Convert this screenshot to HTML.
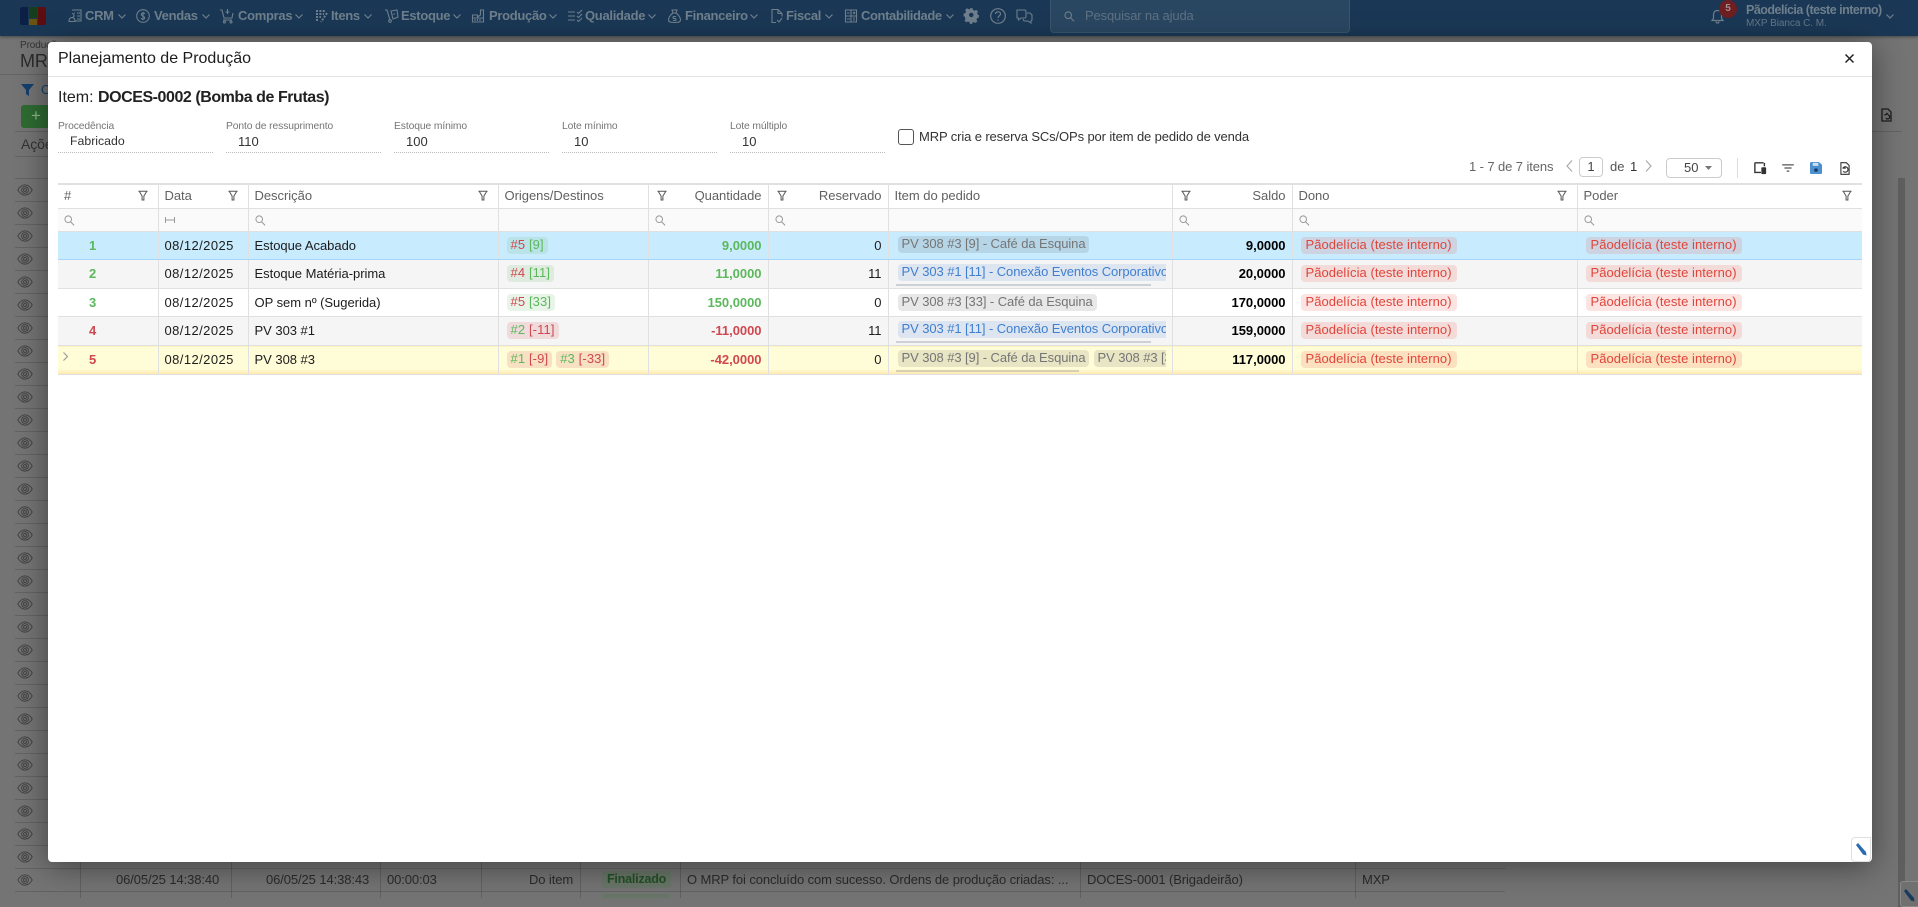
<!DOCTYPE html>
<html lang="pt-BR"><head><meta charset="utf-8"><title>Planejamento de Produção</title>
<style>
*{box-sizing:border-box}
html,body{margin:0;padding:0;width:1918px;height:907px;overflow:hidden;background:#747474;font-family:"Liberation Sans",sans-serif;font-size:13px;color:#212121}
.a{position:absolute;white-space:nowrap;line-height:1}
svg{position:absolute;display:block;overflow:visible}
#top{position:absolute;left:0;top:0;width:1918px;height:36px;background:#1a3856;box-shadow:0 1px 3px rgba(0,0,0,.4)}
.n{color:#6f7f8c;font-weight:bold;font-size:13px;top:9px;letter-spacing:-.3px}
.ni{fill:none;stroke:#6f7f8c;stroke-width:1.1;top:9px}
.ch{fill:none;stroke:#6f7f8c;stroke-width:1.2;top:14px}
.eye{left:17px;fill:none;stroke:#444;stroke-width:1}
#modal{position:absolute;left:48px;top:42px;width:1824px;height:820px;background:#fff;border-radius:4px;box-shadow:0 4px 32px rgba(0,0,0,.45)}
.lab{font-size:10.3px;color:#757575;letter-spacing:-.1px}
.val{font-size:13px;color:#333;top:93px}
.und{position:absolute;top:110px;width:155px;border-bottom:1px dotted #bbb;height:1px}
table{position:absolute;left:10px;top:141px;width:1804px;border-collapse:collapse;table-layout:fixed;font-size:13px;letter-spacing:-.03px;color:#1c1c1c}
td,th{border:1px solid #e0e0e0;padding:0 6px 1px;white-space:nowrap;position:relative;overflow:hidden;font-weight:normal;text-align:left}
td:first-child,th:first-child{border-left:0}
td:last-child,th:last-child{border-right:0}
tr.h th{height:24.5px;color:#616161;border-top:2px solid #e0e0e0;background:#fff;padding-bottom:3px}
tr.f td{height:23px;background:#fafafa}
.r{text-align:right !important}
.fi{fill:none;stroke:#555;stroke-width:1.1;top:5px}
.s{fill:none;stroke:#999;stroke-width:1.1;top:6px;left:6px}
.num{font-weight:bold;padding-left:31px;padding-right:0}
.dt{letter-spacing:.42px}
.g{color:#5cb85c}.d{color:#d0474f}
.b{font-weight:bold;color:#000}
.q{font-weight:bold}
.c{display:inline-block;height:17px;line-height:16px;padding:0 4px;border-radius:4px;margin-right:4px;vertical-align:middle;letter-spacing:.05px}
.og{margin-left:2px}
.tr{background:rgba(92,184,92,.15)}.rd{background:rgba(208,71,79,.15)}
.og,.rd{letter-spacing:.12px}
.gy{background:rgba(0,0,0,.09);color:#757575;letter-spacing:-.08px}
.bl{background:rgba(63,127,208,.13);color:#3f7fd0;letter-spacing:-.08px}
.ow{background:rgba(231,76,60,.15);color:#e0453a;padding:0 5px;letter-spacing:.06px;margin-left:2px}
.clip{position:absolute;left:4px;right:6px;top:0;bottom:0;overflow:hidden;display:block}
.clip .c{position:absolute;top:4px}
.sb{position:absolute;left:3px;top:24px;height:2px;background:rgba(100,110,125,.27)}
tr.r1 td{height:28px;background:#c9ebfe;border-bottom:1px solid #a5d6f7}
tr.r2 td{height:29px;background:#f5f5f5}
tr.r3 td{height:28px;background:#fff}
tr.r4 td{height:29px;background:#f5f5f5}
tr.r5 td{height:29px;background:linear-gradient(#fffcd8 0,#fffcd8 80%,#ffe9ab 100%);border-bottom:1px solid #e0e0e0}
.bg{color:#2b2b2b;font-size:13px;letter-spacing:-.1px}
.ln{position:absolute;background:rgba(40,40,40,.22);height:1px}
.vl{position:absolute;background:rgba(40,40,40,.25);width:1px}
</style></head><body>
<svg width="0" height="0" style="position:absolute"><defs>
<symbol id="fl" viewBox="0 0 11 11"><path d="M.5 .8h10M1.3 .8L4.5 6v4.5h2V6L9.7 .8"/></symbol>
<symbol id="sr" viewBox="0 0 12 12"><circle cx="4.6" cy="4.6" r="3.6"/><path d="M7.2 7.4L11 11.3"/></symbol>
<symbol id="ey" viewBox="0 0 16 12"><path d="M.8 6C3 2.2 5.4 .9 8 .9s5 1.3 7.2 5.1C13 9.8 10.6 11.1 8 11.1S3 9.8 .8 6z"/><circle cx="8" cy="6" r="3.4"/><circle cx="8" cy="6" r="1.5"/></symbol>
<symbol id="cv" viewBox="0 0 8 5"><path d="M.5 .5L4 4l3.5-3.5"/></symbol>
</defs></svg>

<!-- background page -->
<div class="a bg" style="left:20px;top:41px;font-size:10px;color:#333">Produção</div>
<div class="a bg" style="left:20px;top:52px;font-size:18px;color:#2b2b2b">MRP</div>
<div class="ln" style="left:0;top:74px;width:48px;background:rgba(40,40,40,.2)"></div>
<svg style="left:21px;top:84px" width="13" height="12"><path d="M0 0h13L8 6v6L5 10V6z" fill="#14406c"/></svg>
<div class="a" style="left:41px;top:83px;color:#14406c;font-size:13px">O</div>
<div class="a" style="left:21px;top:105px;width:40px;height:23px;background:#2e6b32;border-radius:3px;color:#8fb890;font-size:17px;line-height:22px;padding-left:10px">+</div>
<div class="ln" style="left:15px;top:131px;width:40px"></div>
<div class="a bg" style="left:21px;top:137px;font-size:14px;color:#333">Ações</div>
<div class="ln" style="left:15px;top:156px;width:40px"></div>
<div class="ln" style="left:15px;top:178px;width:40px"></div>
<div class="ln" style="left:15px;top:201px;width:40px"></div>
<div class="ln" style="left:15px;top:224px;width:40px"></div>
<div class="ln" style="left:15px;top:247px;width:40px"></div>
<div class="ln" style="left:15px;top:270px;width:40px"></div>
<div class="ln" style="left:15px;top:293px;width:40px"></div>
<div class="ln" style="left:15px;top:316px;width:40px"></div>
<div class="ln" style="left:15px;top:339px;width:40px"></div>
<div class="ln" style="left:15px;top:362px;width:40px"></div>
<div class="ln" style="left:15px;top:385px;width:40px"></div>
<div class="ln" style="left:15px;top:408px;width:40px"></div>
<div class="ln" style="left:15px;top:431px;width:40px"></div>
<div class="ln" style="left:15px;top:454px;width:40px"></div>
<div class="ln" style="left:15px;top:477px;width:40px"></div>
<div class="ln" style="left:15px;top:500px;width:40px"></div>
<div class="ln" style="left:15px;top:523px;width:40px"></div>
<div class="ln" style="left:15px;top:546px;width:40px"></div>
<div class="ln" style="left:15px;top:569px;width:40px"></div>
<div class="ln" style="left:15px;top:592px;width:40px"></div>
<div class="ln" style="left:15px;top:615px;width:40px"></div>
<div class="ln" style="left:15px;top:638px;width:40px"></div>
<div class="ln" style="left:15px;top:661px;width:40px"></div>
<div class="ln" style="left:15px;top:684px;width:40px"></div>
<div class="ln" style="left:15px;top:707px;width:40px"></div>
<div class="ln" style="left:15px;top:730px;width:40px"></div>
<div class="ln" style="left:15px;top:753px;width:40px"></div>
<div class="ln" style="left:15px;top:776px;width:40px"></div>
<div class="ln" style="left:15px;top:799px;width:40px"></div>
<div class="ln" style="left:15px;top:822px;width:40px"></div>
<div class="ln" style="left:15px;top:845px;width:40px"></div>
<div class="ln" style="left:15px;top:868px;width:1490px"></div>
<div class="ln" style="left:15px;top:891px;width:1490px"></div>
<svg class="eye" style="top:184px" width="16" height="12"><use href="#ey"/></svg>
<svg class="eye" style="top:207px" width="16" height="12"><use href="#ey"/></svg>
<svg class="eye" style="top:230px" width="16" height="12"><use href="#ey"/></svg>
<svg class="eye" style="top:253px" width="16" height="12"><use href="#ey"/></svg>
<svg class="eye" style="top:276px" width="16" height="12"><use href="#ey"/></svg>
<svg class="eye" style="top:299px" width="16" height="12"><use href="#ey"/></svg>
<svg class="eye" style="top:322px" width="16" height="12"><use href="#ey"/></svg>
<svg class="eye" style="top:345px" width="16" height="12"><use href="#ey"/></svg>
<svg class="eye" style="top:368px" width="16" height="12"><use href="#ey"/></svg>
<svg class="eye" style="top:391px" width="16" height="12"><use href="#ey"/></svg>
<svg class="eye" style="top:414px" width="16" height="12"><use href="#ey"/></svg>
<svg class="eye" style="top:437px" width="16" height="12"><use href="#ey"/></svg>
<svg class="eye" style="top:460px" width="16" height="12"><use href="#ey"/></svg>
<svg class="eye" style="top:483px" width="16" height="12"><use href="#ey"/></svg>
<svg class="eye" style="top:506px" width="16" height="12"><use href="#ey"/></svg>
<svg class="eye" style="top:529px" width="16" height="12"><use href="#ey"/></svg>
<svg class="eye" style="top:552px" width="16" height="12"><use href="#ey"/></svg>
<svg class="eye" style="top:575px" width="16" height="12"><use href="#ey"/></svg>
<svg class="eye" style="top:598px" width="16" height="12"><use href="#ey"/></svg>
<svg class="eye" style="top:621px" width="16" height="12"><use href="#ey"/></svg>
<svg class="eye" style="top:644px" width="16" height="12"><use href="#ey"/></svg>
<svg class="eye" style="top:667px" width="16" height="12"><use href="#ey"/></svg>
<svg class="eye" style="top:690px" width="16" height="12"><use href="#ey"/></svg>
<svg class="eye" style="top:713px" width="16" height="12"><use href="#ey"/></svg>
<svg class="eye" style="top:736px" width="16" height="12"><use href="#ey"/></svg>
<svg class="eye" style="top:759px" width="16" height="12"><use href="#ey"/></svg>
<svg class="eye" style="top:782px" width="16" height="12"><use href="#ey"/></svg>
<svg class="eye" style="top:805px" width="16" height="12"><use href="#ey"/></svg>
<svg class="eye" style="top:828px" width="16" height="12"><use href="#ey"/></svg>
<svg class="eye" style="top:851px" width="16" height="12"><use href="#ey"/></svg>
<svg class="eye" style="top:874px" width="16" height="12"><use href="#ey"/></svg>

<div class="vl" style="left:80px;top:862px;height:36px"></div>
<div class="vl" style="left:231px;top:862px;height:36px"></div>
<div class="vl" style="left:380px;top:862px;height:36px"></div>
<div class="vl" style="left:481px;top:862px;height:36px"></div>
<div class="vl" style="left:580px;top:862px;height:36px"></div>
<div class="vl" style="left:680px;top:862px;height:36px"></div>
<div class="vl" style="left:1080px;top:862px;height:36px"></div>
<div class="vl" style="left:1355px;top:862px;height:36px"></div>
<div class="a bg" style="left:116px;top:873px">06/05/25 14:38:40</div>
<div class="a bg" style="left:266px;top:873px">06/05/25 14:38:43</div>
<div class="a bg" style="left:387px;top:873px">00:00:03</div>
<div class="a bg" style="left:529px;top:873px">Do item</div>
<div class="a" style="left:602px;top:871px;height:17px;line-height:17px;padding:0 5px;background:rgba(60,130,60,.2);color:#234f25;font-weight:bold;font-size:12.5px;border-radius:3px;letter-spacing:-.2px">Finalizado</div>
<div class="a" style="left:602px;top:894px;height:4px;width:68px;background:rgba(60,130,60,.2);border-radius:3px 3px 0 0"></div>
<div class="a bg" style="left:687px;top:873px">O MRP foi concluído com sucesso. Ordens de produção criadas: ...</div>
<div class="a bg" style="left:1087px;top:873px">DOCES-0001 (Brigadeirão)</div>
<div class="a bg" style="left:1362px;top:873px">MXP</div>
<div class="ln" style="left:1872px;top:131px;width:30px"></div>
<svg style="left:1881px;top:108px;fill:none;stroke:#1d1d1d;stroke-width:1.3" width="11" height="14"><path d="M1 1h6l3 3v9H1zM3.5 7l3-1-1-1M7 7a2 2 0 1 1-2 3"/></svg>
<div class="a" style="left:1898px;top:178px;width:7px;height:729px;background:#5f5f5f"></div>
<div class="a" style="left:1900px;top:881px;width:18px;height:26px;background:#707070;border:1px solid #888;border-right:0;border-radius:3px 0 0 3px"></div>
<svg style="left:1903px;top:889px" width="13" height="13"><path d="M1 2l2-2 8 9 .5 3.500-3.500-1z" fill="#173a5e"/></svg>

<!-- top bar -->
<div id="top">
<div class="a" style="left:20px;top:7px;width:8px;height:18px;background:#0c1f44;border-radius:2px 0 0 2px"></div>
<div class="a" style="left:29px;top:7px;width:8px;height:11px;background:#153f1c"></div>
<div class="a" style="left:29px;top:19px;width:8px;height:6px;background:#6b5410"></div>
<div class="a" style="left:38px;top:7px;width:8px;height:18px;background:#5e0d10;border-radius:0 2px 2px 0"></div>

<svg class="ni" style="left:68px" width="14" height="14"><path d="M4 1h9v11H7M6 4h1M9 4h3M9 7h3M9 10h3M1 12.5c0-3 1-4 3-4s3 1 3 4zM4 8.5a2 2 0 1 0 0-4"/></svg>
<div class="a n" style="left:85px">CRM</div><svg class="ch" style="left:118px" width="8" height="5"><use href="#cv"/></svg>
<svg class="ni" style="left:136px" width="14" height="14"><circle cx="7" cy="7" r="6.3"/><path d="M9 4.8C8.5 4 6 3.6 5.4 5c-.7 2 3.5 1.8 3.3 4-.3 1.5-3 1.3-3.7.2M7 2.8v8.4"/></svg>
<div class="a n" style="left:154px">Vendas</div><svg class="ch" style="left:202px" width="8" height="5"><use href="#cv"/></svg>
<svg class="ni" style="left:220px" width="14" height="14"><path d="M0 1h2l2 8h8l1-5M3 11h9M7.5 0v5M5.5 3h4"/><circle cx="4.5" cy="13" r="1"/><circle cx="11" cy="13" r="1"/></svg>
<div class="a n" style="left:238px">Compras</div><svg class="ch" style="left:295px" width="8" height="5"><use href="#cv"/></svg>
<svg class="ni" style="left:315px;stroke-dasharray:2 1.4" width="13" height="14"><path d="M1 2h10M1 5h8M1 8h5M1 11h3M12 4L6 13" stroke-width="2"/></svg>
<div class="a n" style="left:331px">Itens</div><svg class="ch" style="left:364px" width="8" height="5"><use href="#cv"/></svg>
<svg class="ni" style="left:385px" width="14" height="14"><path d="M0 1h2l3 10h-1M6 2l6-1 1 7-5 2zM8 5h2"/><circle cx="5" cy="12" r="1.3"/></svg>
<div class="a n" style="left:401px">Estoque</div><svg class="ch" style="left:453px" width="8" height="5"><use href="#cv"/></svg>
<svg class="ni" style="left:472px" width="13" height="14"><path d="M.5 13V6h5V8l3-2V1h3v12zM3 10v2M5.5 10v2M8 10v2M.5 9h11"/></svg>
<div class="a n" style="left:489px">Produção</div><svg class="ch" style="left:549px" width="8" height="5"><use href="#cv"/></svg>
<svg class="ni" style="left:568px" width="14" height="14"><path d="M0 3h7M0 7h7M0 11h7M9 3l1.5 1.5L14 1M9 7l1.5 1.5L14 5M9 11l1.5 1.5L14 9"/></svg>
<div class="a n" style="left:585px">Qualidade</div><svg class="ch" style="left:648px" width="8" height="5"><use href="#cv"/></svg>
<svg class="ni" style="left:668px" width="13" height="14"><path d="M4 1h5L8 4H5zM5 4C2 6 .5 9 .5 11c0 2 2 2.500 6 2.500s6-.5 6-2.500C12.500 9 11 6 8 4M8 7.500H6a1 1 0 0 0 0 2h1a1 1 0 0 1 0 2H5"/></svg>
<div class="a n" style="left:685px">Financeiro</div><svg class="ch" style="left:750px" width="8" height="5"><use href="#cv"/></svg>
<svg class="ni" style="left:771px" width="12" height="14"><path d="M5 13.500H1V.5h6l4 4v3M7 .5v4h4M6 11l2 2 3-4"/></svg>
<div class="a n" style="left:786px">Fiscal</div><svg class="ch" style="left:825px" width="8" height="5"><use href="#cv"/></svg>
<svg class="ni" style="left:845px" width="12" height="14"><path d="M.5 1h11v12H.5zM.5 7h11M6 1v12M2 4h2.500M3 10h1.500M2 10h3M8 3l2 2M10 3L8 5M8 9h2M8 11h2"/></svg>
<div class="a n" style="left:861px;letter-spacing:-.4px">Contabilidade</div><svg class="ch" style="left:946px" width="8" height="5"><use href="#cv"/></svg>
<svg style="left:964px;top:8px" width="15" height="15"><path fill="#6f7f8c" fill-rule="evenodd" d="M6 0h3l.5 2 1.700.8 1.800-1 2 2-1 1.800.7 1.700 1.300.2v3l-2 .5-.7 1.700 1 1.800-2 2-1.800-1-1.700.7-.5 1.300H6l-.5-2-1.700-.7-1.800 1-2-2 1-1.800L.3 9.300-1 9V6l2-.5.7-1.700-1-1.800 2-2 1.800 1L6 1.500zM7.500 5a2.500 2.500 0 1 0 0 5 2.500 2.500 0 0 0 0-5z" transform="translate(.5 .2) scale(.9)"/></svg>
<svg style="left:990px;top:8px;fill:none;stroke:#6f7f8c;stroke-width:1.2" width="16" height="16"><circle cx="8" cy="8" r="7.300"/><path d="M5.500 6c.3-3 5-2.800 5 0 0 2-2.500 1.800-2.500 4M8 11.500v1.300"/></svg>
<svg style="left:1016px;top:9px;fill:none;stroke:#6f7f8c;stroke-width:1.100" width="17" height="15"><path d="M1 1h8l1 1v6l-1 1H5L2.500 11V9H1zM11 4h3l2 2v5l-1 1v2l-3-2H8l-1-2"/></svg>
<div class="a" style="left:1050px;top:0;width:300px;height:33px;background:#2a4762;border:1px solid #3a566f;border-top:0;border-radius:0 0 4px 4px"></div>
<svg style="left:1064px;top:11px;fill:none;stroke:#6f7f8c;stroke-width:1.200" width="11" height="11"><use href="#sr"/></svg>
<div class="a" style="left:1085px;top:9px;color:#5f7284;font-size:13px;letter-spacing:-.15px">Pesquisar na ajuda</div>
<svg style="left:1710px;top:8px;fill:none;stroke:#6f7f8c;stroke-width:1.200" width="15" height="16"><path d="M2 12.500h11L11.500 10.500V7C11.500 4 10 2.500 7.500 2.500S3.500 4 3.500 7v3.500zM6 13.500c0 2 3 2 3 0"/></svg>
<div class="a" style="left:1719px;top:0;width:18px;height:18px;border-radius:50%;background:#6d1f21;color:#a48f8f;font-size:10px;font-weight:bold;line-height:18px;text-align:center">5</div>
<div class="a" style="left:1746px;top:4px;color:#6f7f8c;font-weight:bold;font-size:12.5px;letter-spacing:-.5px">Pãodelícia (teste interno)</div>
<div class="a" style="left:1746px;top:19px;color:#66788a;font-size:10px;letter-spacing:-.05px">MXP Bianca C. M.</div>
<svg class="ch" style="left:1886px;top:14px" width="8" height="5"><use href="#cv"/></svg>
</div>

<!-- modal -->
<div id="modal">
<div class="a" style="left:10px;top:8px;font-size:16px;color:#1c1c1c;line-height:18px">Planejamento de Produção</div>
<svg style="left:1797px;top:12px;fill:none;stroke:#222;stroke-width:1.500" width="9" height="9"><path d="M.5 .5l8 8M8.500 .5l-8 8"/></svg>
<div style="position:absolute;left:0;top:34px;width:1824px;height:1px;background:#e3e3e3"></div>
<div class="a" style="left:10px;top:47px;font-size:16px;line-height:18px;color:#212121">Item: <b style="letter-spacing:-.45px">DOCES-0002 (Bomba de Frutas)</b></div>

<div class="a lab" style="left:10px;top:80px">Procedência</div><div class="a val" style="left:22px;font-size:12.3px">Fabricado</div><div class="und" style="left:10px"></div>
<div class="a lab" style="left:178px;top:80px">Ponto de ressuprimento</div><div class="a val" style="left:190px">110</div><div class="und" style="left:178px"></div>
<div class="a lab" style="left:346px;top:80px">Estoque mínimo</div><div class="a val" style="left:358px">100</div><div class="und" style="left:346px"></div>
<div class="a lab" style="left:514px;top:80px">Lote mínimo</div><div class="a val" style="left:526px">10</div><div class="und" style="left:514px"></div>
<div class="a lab" style="left:682px;top:80px">Lote múltiplo</div><div class="a val" style="left:694px">10</div><div class="und" style="left:682px"></div>
<div class="a" style="left:850px;top:87px;width:16px;height:16px;border:1.500px solid #555;border-radius:3px;background:#fff"></div>
<div class="a" style="left:871px;top:88px;font-size:13px;color:#333;letter-spacing:-.12px">MRP cria e reserva SCs/OPs por item de pedido de venda</div>

<div class="a" style="left:1421px;top:118px;font-size:13px;color:#666;letter-spacing:-.1px">1 - 7 de 7 itens</div>
<svg style="left:1518px;top:118px;fill:none;stroke:#aaa;stroke-width:1.200" width="7" height="12"><path d="M6 .5L1 6l5 5.500"/></svg>
<div class="a" style="left:1531px;top:115px;width:24px;height:20px;border:1px solid #ccc;border-radius:4px;text-align:center;line-height:18px;color:#444">1</div>
<div class="a" style="left:1562px;top:118px;color:#555">de</div>
<div class="a" style="left:1582px;top:118px;color:#333">1</div>
<svg style="left:1597px;top:118px;fill:none;stroke:#aaa;stroke-width:1.200" width="7" height="12"><path d="M1 .5L6 6l-5 5.500"/></svg>
<div class="a" style="left:1618px;top:116px;width:56px;height:20px;border:1px solid #ccc;border-radius:4px;line-height:18px;padding-left:17px;color:#444">50</div>
<svg style="left:1657px;top:124px" width="7" height="4"><path d="M0 0h7L3.500 4z" fill="#777"/></svg>
<div style="position:absolute;left:1689px;top:116px;width:1px;height:20px;background:#ddd"></div>
<svg style="left:1706px;top:120px" width="13" height="13" viewBox="0 0 15 15"><path d="M11 1H2a1 1 0 0 0-1 1v10h7" fill="none" stroke="#333" stroke-width="1.600"/><path d="M12 1v4" stroke="#333" stroke-width="1.600"/><rect x="8.500" y="6" width="5.500" height="8" rx="1" fill="#333"/></svg>
<svg style="left:1734px;top:122px" width="12" height="8" viewBox="0 0 13 9"><path d="M0 1h13M2.500 4.500h8M5 8h3" stroke="#555" stroke-width="1.400"/></svg>
<svg style="left:1762px;top:120px" width="12" height="12" viewBox="0 0 13 14" preserveAspectRatio="none"><path d="M1.500 0h8L13 3v9.500a1.500 1.500 0 0 1-1.500 1.500h-10A1.500 1.500 0 0 1 0 12.500v-11A1.500 1.500 0 0 1 1.500 0z" fill="#4c90d0"/><rect x="3" y="1" width="6" height="3.500" fill="#cfe2f3"/><circle cx="6.500" cy="9.500" r="2" fill="#123c66"/></svg>
<svg style="left:1792px;top:120px;fill:none;stroke:#333;stroke-width:1.200" width="10" height="13" viewBox="0 0 11 14"><path d="M1 .6h6l3 3v9.800H1zM3 7l2.500-1.500V7.500M3 7a3 3 0 1 1 .5 3"/></svg>

<table>
<colgroup><col style="width:100px"><col style="width:90px"><col style="width:250px"><col style="width:150px"><col style="width:120px"><col style="width:120px"><col style="width:284px"><col style="width:120px"><col style="width:285px"><col style="width:285px"></colgroup>
<tr class="h">
<th>#<svg class="fi" style="right:10px" width="10" height="11"><use href="#fl"/></svg></th>
<th>Data<svg class="fi" style="right:10px" width="10" height="11"><use href="#fl"/></svg></th>
<th>Descrição<svg class="fi" style="right:10px" width="10" height="11"><use href="#fl"/></svg></th>
<th>Origens/Destinos</th>
<th class="r"><svg class="fi" style="left:8px" width="10" height="11"><use href="#fl"/></svg>Quantidade</th>
<th class="r"><svg class="fi" style="left:8px" width="10" height="11"><use href="#fl"/></svg>Reservado</th>
<th>Item do pedido</th>
<th class="r"><svg class="fi" style="left:8px" width="10" height="11"><use href="#fl"/></svg>Saldo</th>
<th>Dono<svg class="fi" style="right:10px" width="10" height="11"><use href="#fl"/></svg></th>
<th>Poder<svg class="fi" style="right:10px" width="10" height="11"><use href="#fl"/></svg></th>
</tr>
<tr class="f">
<td><svg class="s" width="11" height="11"><use href="#sr"/></svg></td>
<td><svg style="left:6px;top:8px;fill:none;stroke:#999;stroke-width:1" width="10" height="6"><path d="M.5 0v6M9.500 0v6M.5 3h9"/></svg></td>
<td><svg class="s" width="11" height="11"><use href="#sr"/></svg></td>
<td></td>
<td><svg class="s" width="11" height="11"><use href="#sr"/></svg></td>
<td><svg class="s" width="11" height="11"><use href="#sr"/></svg></td>
<td></td>
<td><svg class="s" width="11" height="11"><use href="#sr"/></svg></td>
<td><svg class="s" width="11" height="11"><use href="#sr"/></svg></td>
<td><svg class="s" width="11" height="11"><use href="#sr"/></svg></td>
</tr>
<tr class="r1">
<td class="num g">1</td><td class="dt">08/12/2025</td><td>Estoque Acabado</td>
<td><span class="c og tr"><span class="d">#5</span> <span class="g">[9]</span></span></td>
<td class="r g q">9,0000</td><td class="r">0</td>
<td><span class="clip"><span class="c gy" style="left:5px">PV 308 #3 [9] - Café da Esquina</span></span></td>
<td class="r b">9,0000</td>
<td><span class="c ow">Pãodelícia (teste interno)</span></td>
<td><span class="c ow">Pãodelícia (teste interno)</span></td>
</tr>
<tr class="r2">
<td class="num g">2</td><td class="dt">08/12/2025</td><td>Estoque Matéria-prima</td>
<td><span class="c og tr"><span class="d">#4</span> <span class="g">[11]</span></span></td>
<td class="r g q">11,0000</td><td class="r">11</td>
<td><span class="clip"><span class="c bl" style="left:5px">PV 303 #1 [11] - Conexão Eventos Corporativos</span><span class="sb" style="width:255px"></span></span></td>
<td class="r b">20,0000</td>
<td><span class="c ow">Pãodelícia (teste interno)</span></td>
<td><span class="c ow">Pãodelícia (teste interno)</span></td>
</tr>
<tr class="r3">
<td class="num g">3</td><td class="dt">08/12/2025</td><td>OP sem nº (Sugerida)</td>
<td><span class="c og tr"><span class="d">#5</span> <span class="g">[33]</span></span></td>
<td class="r g q">150,0000</td><td class="r">0</td>
<td><span class="clip"><span class="c gy" style="left:5px;top:5px">PV 308 #3 [33] - Café da Esquina</span></span></td>
<td class="r b">170,0000</td>
<td><span class="c ow">Pãodelícia (teste interno)</span></td>
<td><span class="c ow">Pãodelícia (teste interno)</span></td>
</tr>
<tr class="r4">
<td class="num d">4</td><td class="dt">08/12/2025</td><td>PV 303 #1</td>
<td><span class="c og rd"><span class="g">#2</span> <span class="d">[-11]</span></span></td>
<td class="r d q">-11,0000</td><td class="r">11</td>
<td><span class="clip"><span class="c bl" style="left:5px">PV 303 #1 [11] - Conexão Eventos Corporativos</span><span class="sb" style="width:255px"></span></span></td>
<td class="r b">159,0000</td>
<td><span class="c ow">Pãodelícia (teste interno)</span></td>
<td><span class="c ow">Pãodelícia (teste interno)</span></td>
</tr>
<tr class="r5">
<td class="num d"><svg style="left:5px;top:6px;fill:none;stroke:#999;stroke-width:1.100" width="5" height="9"><path d="M.5 .5l4 4-4 4"/></svg>5</td><td class="dt">08/12/2025</td><td>PV 308 #3</td>
<td><span class="c og rd"><span class="g">#1</span> <span class="d">[-9]</span></span><span class="c rd"><span class="g">#3</span> <span class="d">[-33]</span></span></td>
<td class="r d q">-42,0000</td><td class="r">0</td>
<td><span class="clip"><span class="c gy" style="left:5px">PV 308 #3 [9] - Café da Esquina</span><span class="c gy" style="left:201px">PV 308 #3 [33] - Café da Esquina</span><span class="sb" style="width:183px"></span></span></td>
<td class="r b">117,0000</td>
<td><span class="c ow">Pãodelícia (teste interno)</span></td>
<td><span class="c ow">Pãodelícia (teste interno)</span></td>
</tr>
</table>

<div class="a" style="left:1803px;top:795px;width:20px;height:25px;background:#fff;border:1px solid #e0e0e0;border-radius:4px 0 4px 4px"></div>
<svg style="left:1807px;top:801px" width="13" height="13"><path d="M1 2l2-2 8 9 .5 3.500-3.500-1z" fill="#2a6bb0"/></svg>
</div>
</body></html>
